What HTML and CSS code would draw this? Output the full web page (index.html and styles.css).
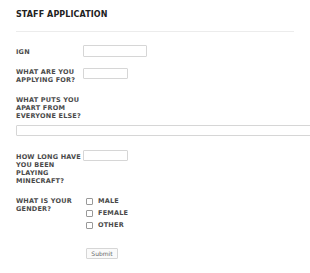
FILE: index.html
```html
<!DOCTYPE html>
<html>
<head>
<meta charset="utf-8">
<link rel="stylesheet" href="styles.css">
</head>
<body>
<div class="page">
  <h1 class="title">STAFF APPLICATION</h1>
  <div class="rule"></div>
  <form class="form">
    <div class="row row-ign">
      <label class="lbl">IGN</label>
      <input class="field field-wide" type="text">
    </div>
    <div class="row row-apply">
      <label class="lbl">WHAT ARE YOU APPLYING FOR?</label>
      <input class="field field-short" type="text">
    </div>
    <div class="block row-apart">
      <label class="lbl lbl-block">WHAT PUTS YOU APART FROM EVERYONE ELSE?</label>
      <input class="field field-full" type="text">
    </div>
    <div class="row row-long">
      <label class="lbl">HOW LONG HAVE YOU BEEN PLAYING MINECRAFT?</label>
      <input class="field field-short" type="text">
    </div>
    <div class="row row-gender">
      <label class="lbl">WHAT IS YOUR GENDER?</label>
      <div class="opts">
        <label class="opt"><span class="box"></span>MALE</label>
        <label class="opt"><span class="box"></span>FEMALE</label>
        <label class="opt"><span class="box"></span>OTHER</label>
      </div>
    </div>
    <div class="submit-row">
      <button class="submit" type="button">Submit</button>
    </div>
  </form>
</div>
</body>
</html>
```

FILE: styles.css
```css
html, body {
  margin: 0;
  padding: 0;
  background: #fff;
  overflow: hidden;
}
.page {
  padding: 9px 0 0 16px;
  font-family: "DejaVu Sans", Verdana, sans-serif;
  width: 278px;
}
.title {
  margin: 0;
  font-size: 8px;
  line-height: 12px;
  font-weight: bold;
  color: #222;
  letter-spacing: 0.1px;
}
.rule {
  margin-top: 10px;
  height: 1px;
  background: #ececec;
  width: 278px;
}
.form {
  display: flex;
  flex-direction: column;
}
.row {
  display: grid;
  grid-template-columns: 67px auto;
  align-items: start;
}
.lbl {
  font-size: 6.5px;
  line-height: 8px;
  font-weight: bold;
  color: #4a4a4a;
  letter-spacing: 0.2px;
  width: 66px;
}
.lbl-block {
  display: block;
  width: 70px;
}
.field {
  display: block;
  box-sizing: border-box;
  height: 12px;
  border: 1px solid #d6d6d6;
  border-radius: 1px;
  background: #fff;
  padding: 0;
  margin: 0;
}
.field-wide { width: 64px; }
.field-short { width: 45px; height: 11px; }
.field-full { width: 310px; height: 11px; margin-top: 5px; }
.row-ign { margin-top: 13px; }
.row-ign .lbl { padding-top: 3px; }
.row-apply { margin-top: 11px; }
.row-apply .lbl { padding-top: 0; }
.row-apart { margin-top: 12px; }
.row-long { margin-top: 14px; }
.row-long .lbl { padding-top: 3px; }
.row-gender { margin-top: 12px; }
.opts {
  display: flex;
  flex-direction: column;
  gap: 4px;
  padding-left: 3px;
}
.opt {
  display: flex;
  align-items: center;
  gap: 5px;
  font-size: 6.5px;
  line-height: 8px;
  font-weight: bold;
  letter-spacing: 0.2px;
  color: #4a4a4a;
}
.box {
  width: 5px;
  height: 5px;
  border: 1px solid #999;
  border-radius: 1px;
}
.submit-row {
  padding-left: 70px;
  margin-top: 12px;
}
.submit {
  width: 32px;
  height: 11px;
  padding: 0;
  border: 1px solid #d6d6d6;
  background: #fafafa;
  font-family: "DejaVu Sans", Verdana, sans-serif;
  font-size: 6px;
  color: #666;
  border-radius: 1px;
}
```
